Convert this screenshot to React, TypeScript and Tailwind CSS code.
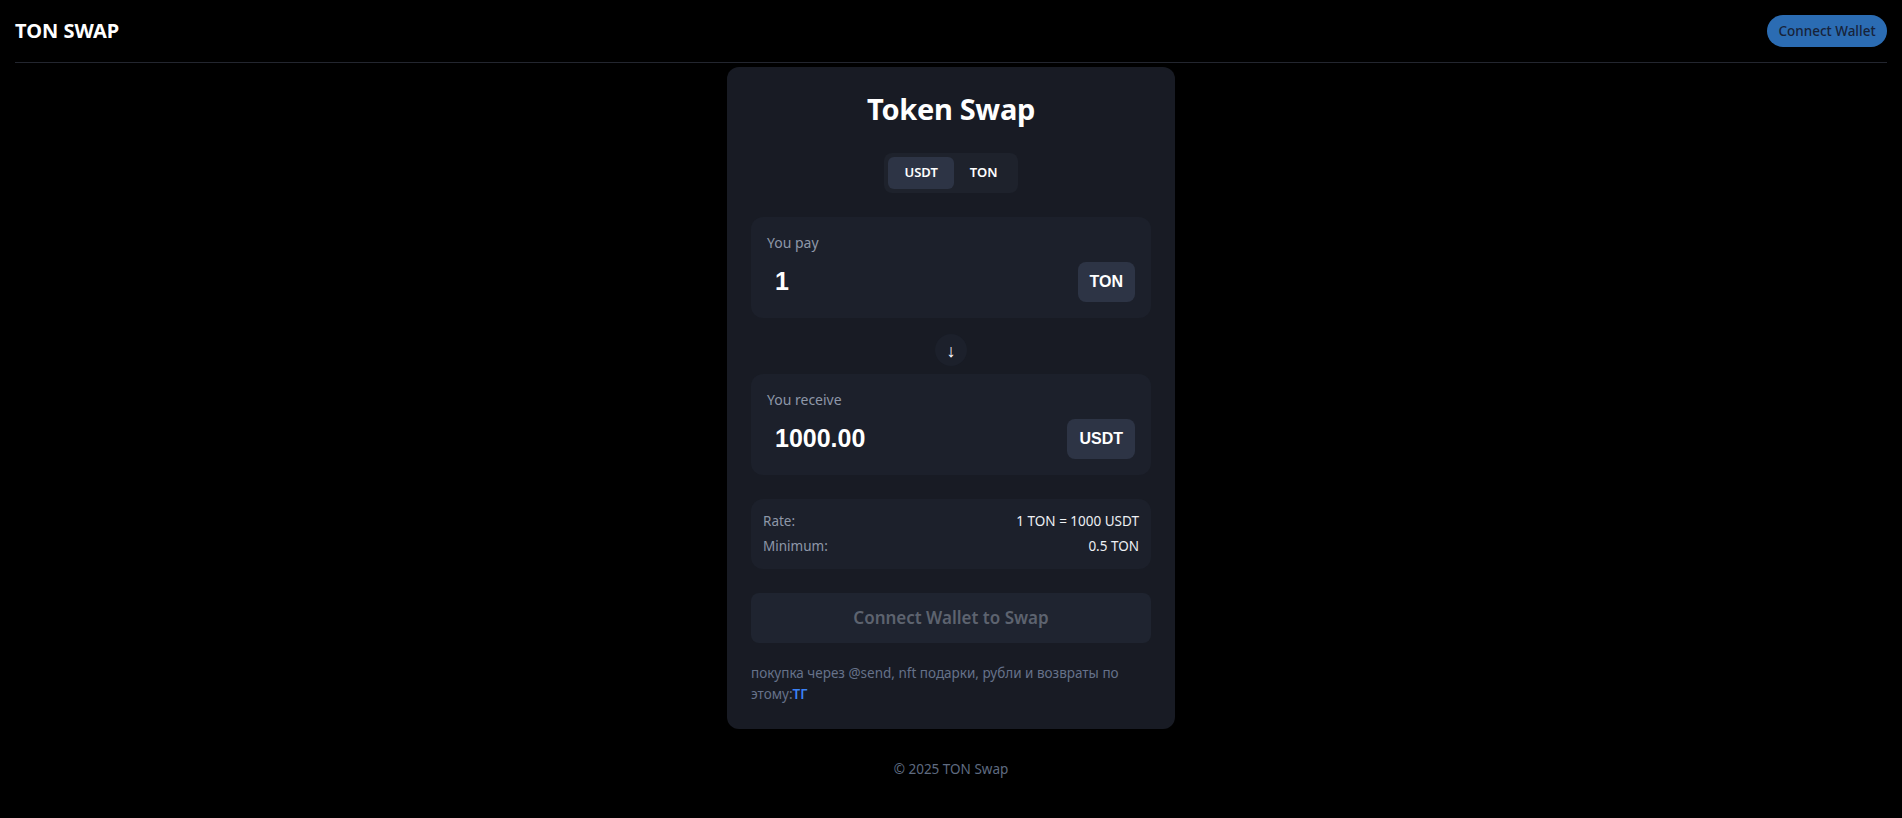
import React from "react";

const sans = { fontFamily: '"Noto Sans", "Open Sans", sans-serif' };

function AmountBox({ label, value, token }: { label: string; value: string; token: string }) {
  return (
    <div className="rounded-xl bg-[#1c202b] p-4">
      <div className="mb-[9px] text-sm leading-5 text-[#8e97a8]">{label}</div>
      <div className="flex items-center justify-between">
        <input
          readOnly
          value={value}
          className="w-[200px] bg-transparent px-2 text-[25px] font-bold text-white outline-none font-['Liberation_Sans',Arial,sans-serif]"
        />
        <button className="h-10 rounded-lg bg-[#2d3445] px-3 text-base font-bold text-white font-['Liberation_Sans',Arial,sans-serif]">
          {token}
        </button>
      </div>
    </div>
  );
}

export default function App() {
  return (
    <div className="min-h-screen bg-black text-white" style={sans}>
      <header className="mx-[15px] flex h-[63px] items-center justify-between border-b border-[#23262f]">
        <div className="text-[20px] font-bold text-white">TON SWAP</div>
        <button className="h-8 w-[120px] rounded-full bg-[#2b6cb3] text-[13.5px] font-medium text-[#17233a]">
          Connect Wallet
        </button>
      </header>

      <main className="flex justify-center pt-[4px]">
        <div className="w-[448px] rounded-xl bg-[#181b24] p-6">
          <h1 className="text-center text-[29px] leading-9 font-bold tracking-[-0.3px] text-white">Token Swap</h1>

          <div className="mb-6 mt-[26px] flex justify-center">
            <div className="flex rounded-lg bg-[#1e222c] p-1">
              <button className="h-8 rounded-md bg-[#2d3445] px-4 text-[13px] font-semibold text-white">
                USDT
              </button>
              <button className="h-8 rounded-md px-4 text-[13px] font-semibold text-white">TON</button>
            </div>
          </div>

          <AmountBox label="You pay" value="1" token="TON" />

          <div className="mb-2 mt-4 flex justify-center">
            <div className="flex h-8 w-8 items-center justify-center rounded-full bg-[#1c202b] text-lg leading-none text-white">
              ↓
            </div>
          </div>

          <AmountBox label="You receive" value="1000.00" token="USDT" />

          <div className="mt-6 flex flex-col gap-[5px] rounded-xl bg-[#1c202b] px-3 pb-[13px] pt-3 text-[13.5px] leading-5">
            <div className="flex justify-between">
              <span className="text-[#8e97a8]">Rate:</span>
              <span className="text-[#eef0f4]">1 TON = 1000 USDT</span>
            </div>
            <div className="flex justify-between">
              <span className="text-[#8e97a8]">Minimum:</span>
              <span className="text-[#eef0f4]">0.5 TON</span>
            </div>
          </div>

          <button className="mt-6 h-[50px] w-full rounded-lg bg-[#1f2430] text-[17px] font-semibold text-[#5d636f]">
            Connect Wallet to Swap
          </button>

          <p className="mt-5 text-[13.5px] leading-[21px] text-[#66728a]">
            покупка через @send, nft подарки, рубли и возвраты по этому:
            <a className="font-semibold text-[#3b82f6]">ТГ</a>
          </p>
        </div>
      </main>

      <footer className="pt-[30px] text-center text-[13.5px] text-[#5f6b80]">© 2025 TON Swap</footer>
    </div>
  );
}
